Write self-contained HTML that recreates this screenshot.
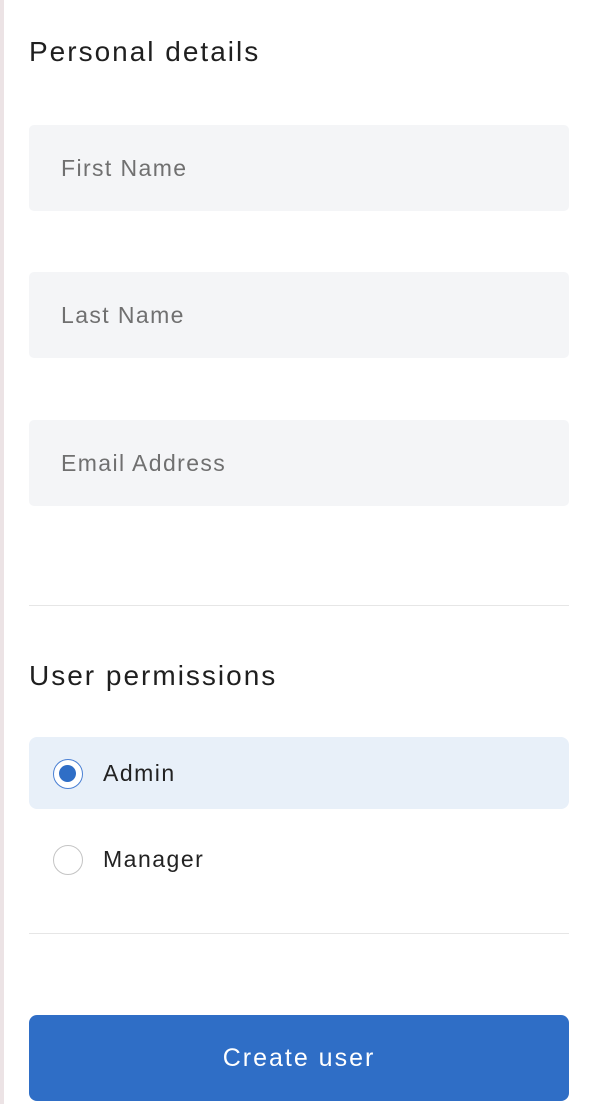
<!DOCTYPE html>
<html><head><meta charset="utf-8"><style>
*{margin:0;padding:0;box-sizing:border-box}
body{width:602px;height:1104px;background:#fff;position:relative;overflow:hidden;font-family:"Liberation Sans",Arial,sans-serif;color:#222}
.strip{position:absolute;left:0;top:0;width:4px;height:1104px;background:#ece3e5}
.h{position:absolute;left:29px;font-size:28px;font-weight:400;color:#1f1f1f;letter-spacing:2px}
.f{position:absolute;left:29px;width:540px;height:86px;background:#f4f5f7;border-radius:5px;font-size:23px;color:#707070;padding-left:32px;line-height:86px;letter-spacing:1.4px}
.hr{position:absolute;left:29px;width:540px;height:1px;background:#e6e6e6}
.opt{position:absolute;left:29px;width:540px;height:72px;border-radius:8px;font-size:23px;line-height:72px;padding-left:74px;color:#222;letter-spacing:1.5px}
.r{position:absolute;left:24px;top:22px;width:30px;height:30px;border-radius:50%;border:1.5px solid #c4c4c4;background:#fff}
.r.on{border-color:#4a80d4}
.r.on::after{content:"";position:absolute;left:5px;top:5px;width:17px;height:17px;border-radius:50%;background:#2f6ec6}
.btn{position:absolute;left:29px;top:1015px;width:540px;height:86px;background:#2f6ec6;border-radius:8px;color:#fff;font-size:25px;text-align:center;line-height:86px;letter-spacing:2px}
</style></head><body>
<div class="strip"></div>
<div class="h" style="top:36px">Personal details</div>
<div class="f" style="top:125px">First Name</div>
<div class="f" style="top:272px">Last Name</div>
<div class="f" style="top:420px">Email Address</div>
<div class="hr" style="top:605px"></div>
<div class="h" style="top:660px">User permissions</div>
<div class="opt" style="top:737px;background:#e8f0f9"><span class="r on"></span>Admin</div>
<div class="opt" style="top:823px"><span class="r"></span>Manager</div>
<div class="hr" style="top:933px"></div>
<div class="btn">Create user</div>
</body></html>
